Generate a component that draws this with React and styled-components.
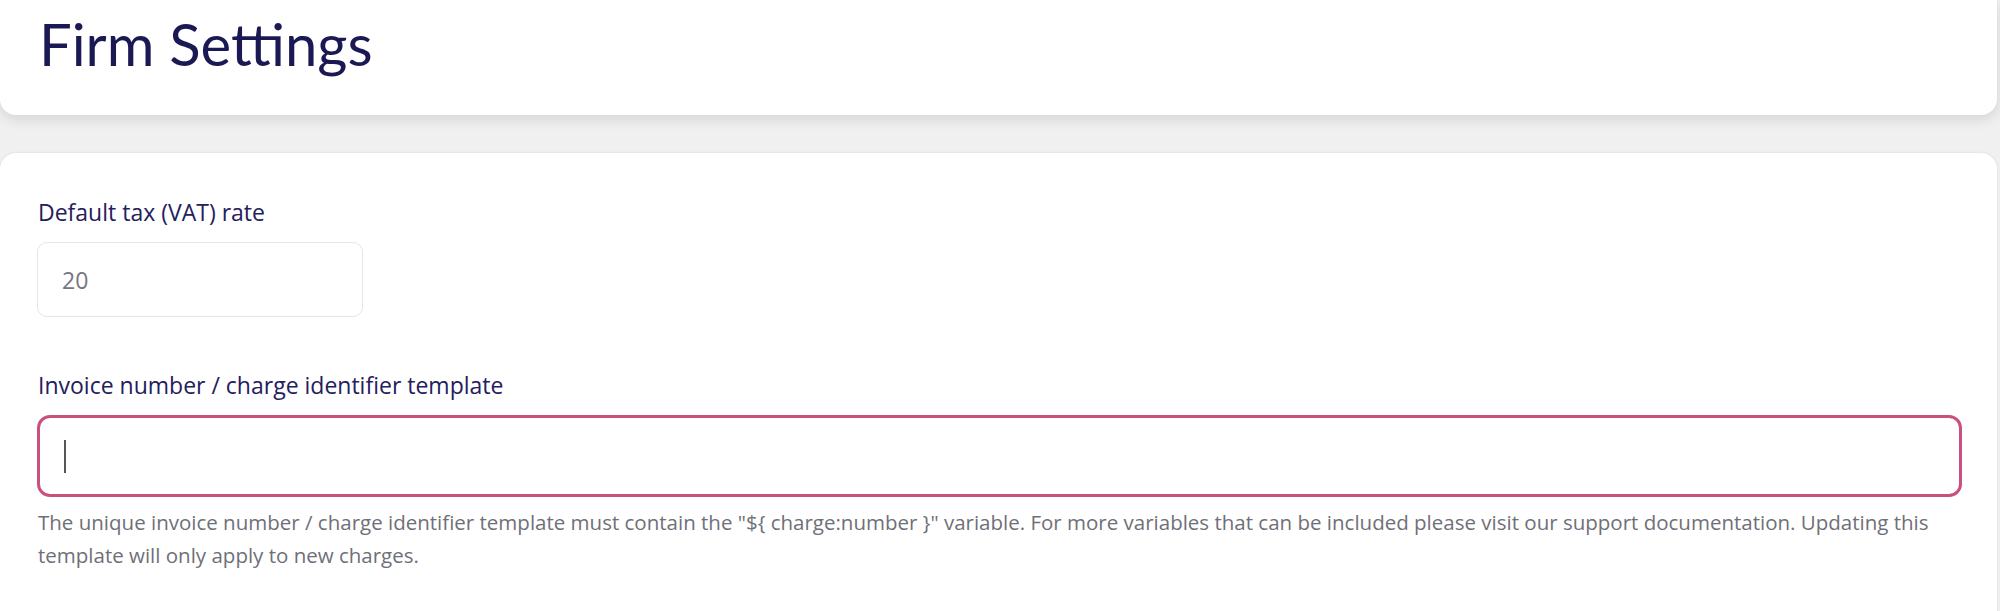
import React from "react";
import styled, { createGlobalStyle } from "styled-components";

const Global = createGlobalStyle`
  html, body {
    margin: 0;
    padding: 0;
    background: #f0f0f0;
  }
  body {
    font-family: "Open Sans", "Lato", sans-serif;
  }
  * { box-sizing: border-box; }
`;

const Page = styled.div`
  display: flex;
  flex-direction: column;
  gap: 38px;
  padding-right: 3px;
  min-height: 611px;
`;

const HeaderCard = styled.header`
  height: 115px;
  background: #ffffff;
  border-radius: 0 0 16px 16px;
  box-shadow: 0 4px 14px rgba(0, 0, 0, 0.12);
  padding: 15px 0 0 39px;
`;

const Title = styled.h1`
  margin: 0;
  font-family: "Lato", sans-serif;
  font-weight: 400;
  font-size: 58px;
  line-height: 1;
  color: #1b1953;
`;

const Card = styled.section`
  background: #ffffff;
  border-radius: 16px 16px 0 0;
  box-shadow: 0 0 3px rgba(0, 0, 0, 0.1);
  padding: 43px 35px 40px 37px;
  flex: 1;
`;

const Field = styled.div`
  display: flex;
  flex-direction: column;
  align-items: flex-start;
  & + & {
    margin-top: 52px;
  }
`;

const Label = styled.label`
  font-size: 23px;
  line-height: 32px;
  color: #24205b;
  margin: 0 0 14px 1px;
`;

const Input = styled.input`
  width: ${(p) => p.$width || "100%"};
  height: ${(p) => p.$height || "75px"};
  border: 1px solid #e6e6ea;
  border-radius: 10px;
  padding: 0 24px;
  font-family: "Open Sans", sans-serif;
  font-size: 23px;
  color: #76767f;
  background: #ffffff;
  outline: none;
`;

const FocusedBox = styled.div`
  width: 100%;
  height: 82px;
  border: 3px solid #c9517f;
  border-radius: 13px;
  padding: 0 24px;
  display: flex;
  align-items: center;
  background: #ffffff;
`;

const Caret = styled.span`
  display: block;
  width: 2px;
  height: 33px;
  background: #55555c;
`;

const Help = styled.p`
  margin: 9px 0 0 1px;
  font-size: 20.5px;
  line-height: 33px;
  color: #6f6f79;
  font-variant-ligatures: none;
`;

const HELP_TEXT =
  'The unique invoice number / charge identifier template must contain the "${ charge:number }" variable. For more variables that can be included please visit our support documentation. Updating this template will only apply to new charges.';

export default function App() {
  return (
    <>
      <Global />
      <Page>
        <HeaderCard>
          <Title>Firm Settings</Title>
        </HeaderCard>
        <Card>
          <Field>
            <Label htmlFor="vat">Default tax (VAT) rate</Label>
            <Input id="vat" $width="326px" defaultValue="20" readOnly />
          </Field>
          <Field>
            <Label id="tpl-label">Invoice number / charge identifier template</Label>
            <FocusedBox role="textbox" aria-labelledby="tpl-label">
              <Caret />
            </FocusedBox>
            <Help>{HELP_TEXT}</Help>
          </Field>
        </Card>
      </Page>
    </>
  );
}
